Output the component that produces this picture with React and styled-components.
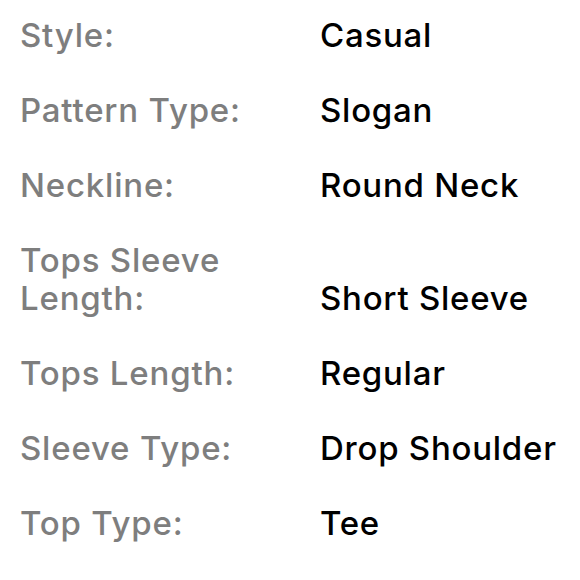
import React from "react";
import styled, { createGlobalStyle } from "styled-components";

const Global = createGlobalStyle`
  html, body { margin: 0; padding: 0; background: #fff; }
  body { font-family: Inter, "Noto Sans", sans-serif; -webkit-font-smoothing: antialiased; }
`;

const List = styled.dl`
  margin: 0;
  padding: 16px 0 0 20px;
  display: flex;
  flex-direction: column;
  gap: 37px;
  width: 560px;
`;

const Row = styled.div`
  display: grid;
  grid-template-columns: 250px 1fr;
  column-gap: 50px;
  align-items: end;
`;

const Label = styled.dt`
  margin: 0;
  font-size: 33px;
  line-height: 38px;
  font-weight: 500;
  letter-spacing: 0.8px;
  color: #7e7e7e;
`;

const Value = styled.dd`
  margin: 0;
  font-size: 33px;
  line-height: 38px;
  font-weight: 500;
  letter-spacing: 0.75px;
  color: #000;
  white-space: nowrap;
`;

const items = [
  ["Style:", "Casual"],
  ["Pattern Type:", "Slogan"],
  ["Neckline:", "Round Neck"],
  ["Tops Sleeve Length:", "Short Sleeve"],
  ["Tops Length:", "Regular"],
  ["Sleeve Type:", "Drop Shoulder"],
  ["Top Type:", "Tee"],
];

export default function App() {
  return (
    <>
      <Global />
      <List>
        {items.map(([k, v]) => (
          <Row key={k}>
            <Label>{k}</Label>
            <Value>{v}</Value>
          </Row>
        ))}
      </List>
    </>
  );
}
